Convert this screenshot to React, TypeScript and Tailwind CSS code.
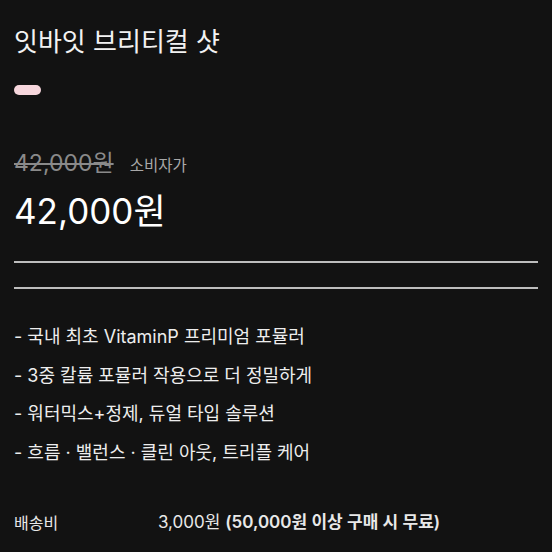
const features = [
  '- 국내 최초 VitaminP 프리미엄 포뮬러',
  '- 3중 칼륨 포뮬러 작용으로 더 정밀하게',
  '- 워터믹스+정제, 듀얼 타입 솔루션',
  '- 흐름 · 밸런스 · 클린 아웃, 트리플 케어',
];

const App = () => {
  return (
    <div
      className="w-[552px] h-[552px] overflow-hidden bg-[#121212] px-[14px] text-white"
      style={{ fontFamily: '"Inter", "Noto Sans CJK KR", sans-serif' }}
    >
      <h1 className="pt-[24px] text-[26px] leading-[36px] font-normal text-[#f2f2f2]">
        잇바잇 브리티컬 샷
      </h1>
      <div className="mt-[25px] h-[10px] w-[27px] rounded-full bg-[#f6d6dc]" />

      <div className="mt-[53px] flex items-baseline gap-[16px]">
        <span className="text-[23px] leading-[30px] text-[#8a8a8a] line-through decoration-[#8a8a8a]">
          42,000원
        </span>
        <span className="text-[15.5px] text-[#a8a8a8]">소비자가</span>
      </div>
      <div className="mt-[10px] text-[35px] leading-[46px] font-normal text-white">
        42,000원
      </div>

      <div className="mt-[27px] h-[2px] w-full bg-[#bdbdbd]" />
      <div className="mt-[24px] h-[2px] w-full bg-[#bdbdbd]" />

      <ul className="mt-[35px] flex flex-col gap-[12.7px]">
        {features.map((item, i) => (
          <li key={i} className="text-[18px] leading-[26px] text-[#ededed]">
            {item}
          </li>
        ))}
      </ul>

      <div className="mt-[44px] flex items-center text-[#e8e8e8]">
        <span className="w-[144px] text-[16px]">배송비</span>
        <span className="text-[17px]">
          3,000원 <span className="font-semibold">(50,000원 이상 구매 시 무료)</span>
        </span>
      </div>
    </div>
  );
};

export default App;
